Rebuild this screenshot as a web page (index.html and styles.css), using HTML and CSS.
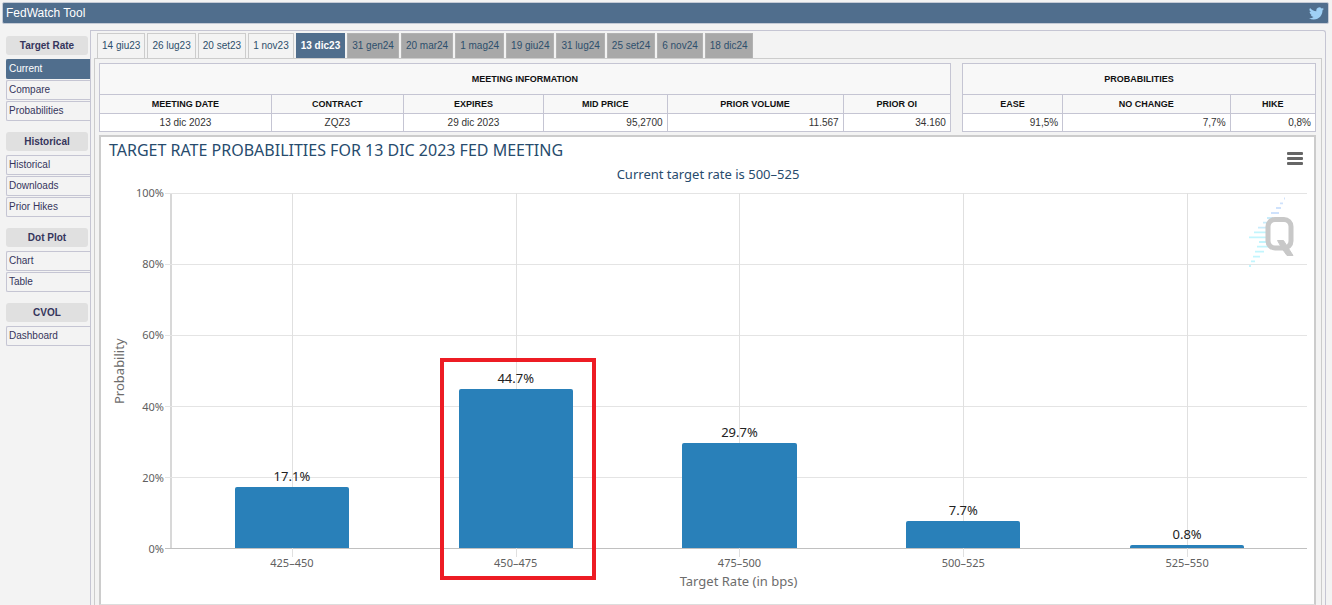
FILE: index.html
```html
<!DOCTYPE html>
<html lang="en">
<head>
<meta charset="utf-8">
<title>FedWatch Tool</title>
<link rel="stylesheet" href="styles.css">
</head>
<body>
<header class="topbar">
  <h1 class="topbar-title">FedWatch Tool</h1>
  <a class="twitter" href="#" aria-label="Twitter">
    <svg viewBox="0 0 24 24" width="15" height="15"><path fill="#9fd0f5" d="M23.95 4.57a10 10 0 0 1-2.82.77 4.96 4.96 0 0 0 2.16-2.72c-.95.55-2 .95-3.13 1.18a4.92 4.92 0 0 0-8.38 4.48C7.69 8.09 4.07 6.13 1.64 3.16a4.92 4.92 0 0 0 1.52 6.57 4.9 4.9 0 0 1-2.23-.61v.06c0 2.38 1.7 4.37 3.95 4.82a5 5 0 0 1-2.21.09 4.94 4.94 0 0 0 4.6 3.42A9.87 9.87 0 0 1 0 19.54a13.99 13.99 0 0 0 7.55 2.21c9.06 0 14-7.5 14-13.98 0-.21 0-.42-.02-.63a9.94 9.94 0 0 0 2.42-2.57z"/></svg>
  </a>
</header>
<div class="layout">
  <nav class="sidebar">
    <section class="group">
      <h2 class="group-title">Target Rate</h2>
      <a class="item active" href="#">Current</a>
      <a class="item" href="#">Compare</a>
      <a class="item" href="#">Probabilities</a>
    </section>
    <section class="group">
      <h2 class="group-title">Historical</h2>
      <a class="item" href="#">Historical</a>
      <a class="item" href="#">Downloads</a>
      <a class="item" href="#">Prior Hikes</a>
    </section>
    <section class="group">
      <h2 class="group-title">Dot Plot</h2>
      <a class="item" href="#">Chart</a>
      <a class="item" href="#">Table</a>
    </section>
    <section class="group">
      <h2 class="group-title">CVOL</h2>
      <a class="item" href="#">Dashboard</a>
    </section>
  </nav>
  <main class="main">
    <div class="tabs">
      <button class="tab">14 giu23</button>
      <button class="tab">26 lug23</button>
      <button class="tab">20 set23</button>
      <button class="tab">1 nov23</button>
      <button class="tab selected">13 dic23</button>
      <button class="tab far">31 gen24</button>
      <button class="tab far">20 mar24</button>
      <button class="tab far">1 mag24</button>
      <button class="tab far">19 giu24</button>
      <button class="tab far">31 lug24</button>
      <button class="tab far">25 set24</button>
      <button class="tab far">6 nov24</button>
      <button class="tab far">18 dic24</button>
    </div>
    <div class="pane">
      <div class="tables">
        <table class="info meeting">
          <colgroup><col class="c-date"><col class="c-contract"><col class="c-expires"><col class="c-mid"><col class="c-volume"><col class="c-oi"></colgroup>
          <thead>
            <tr class="caption-row"><th colspan="6">MEETING INFORMATION</th></tr>
            <tr><th>MEETING DATE</th><th>CONTRACT</th><th>EXPIRES</th><th>MID PRICE</th><th>PRIOR VOLUME</th><th>PRIOR OI</th></tr>
          </thead>
          <tbody>
            <tr><td>13 dic 2023</td><td>ZQZ3</td><td>29 dic 2023</td><td class="num">95,2700</td><td class="num">11.567</td><td class="num">34.160</td></tr>
          </tbody>
        </table>
        <table class="info probs">
          <colgroup><col class="c-ease"><col class="c-nochange"><col class="c-hike"></colgroup>
          <thead>
            <tr class="caption-row"><th colspan="3">PROBABILITIES</th></tr>
            <tr><th>EASE</th><th>NO CHANGE</th><th>HIKE</th></tr>
          </thead>
          <tbody>
            <tr><td class="num">91,5%</td><td class="num">7,7%</td><td class="num">0,8%</td></tr>
          </tbody>
        </table>
      </div>
      <section class="chart">
        <div class="chart-head">
          <h2 class="chart-title">TARGET RATE PROBABILITIES FOR 13 DIC 2023 FED MEETING</h2>
          <button class="menu" aria-label="Chart menu"><span></span><span></span><span></span></button>
        </div>
        <p class="chart-subtitle">Current target rate is 500–525</p>
        <div class="chart-body">
          <div class="y-title">Probability</div>
          <div class="y-axis"><span>100%</span><span>80%</span><span>60%</span><span>40%</span><span>20%</span><span>0%</span></div>
          <div class="plot">
            <div class="gridlines"><i></i><i></i><i></i><i></i><i></i><i></i></div>
            <svg class="watermark" viewBox="0 0 48 72" width="48" height="72" aria-hidden="true">
              <g stroke-width="1.8" fill="none">
                <path stroke="#cfe2fc" d="M35 1.500h1M31 6.300h3M27 11h5M22 16h8"/>
                <path stroke="#c9ecfb" d="M18 21h6M14 25.700h5M9 30.700h8"/>
                <path stroke="#c2f5fd" d="M5 35.300h12M0 40.300h17M10 45h8M8 49.700h11M6 54.700h9M4 59.700h7M2 64.300h4M0 69h2"/>
              </g>
              <rect x="19" y="22.500" width="23" height="28.500" rx="7" fill="none" stroke="#c8c8c8" stroke-width="5"/>
              <path d="M28.500 43.500h6l9.500 15h-6l-5-7z" fill="#c8c8c8" stroke="#c8c8c8"/>
            </svg>
            <div class="column"><span class="value">17.1%</span><div class="bar" style="height:17.1%"></div></div>
            <div class="column"><span class="value">44.7%</span><div class="bar" style="height:44.7%"></div><div class="highlight"></div></div>
            <div class="column"><span class="value">29.7%</span><div class="bar" style="height:29.7%"></div></div>
            <div class="column"><span class="value">7.7%</span><div class="bar" style="height:7.7%"></div></div>
            <div class="column"><span class="value">0.8%</span><div class="bar" style="height:0.8%"></div></div>
          </div>
          <div class="x-axis"><span>425–450</span><span>450–475</span><span>475–500</span><span>500–525</span><span>525–550</span></div>
          <div class="x-title">Target Rate (in bps)</div>
        </div>
      </section>
    </div>
  </main>
</div>
</body>
</html>
```
FILE: styles.css
```css
* { box-sizing: border-box; }

body {
  display: flex;
  flex-direction: column;
  min-height: 100vh;
  margin: 0;
  padding: 2px 3px 0 2px;
  background: #f3f3f3;
  color: #333;
  font: 10px/12px "Liberation Sans", Arial, sans-serif;
}

h1, h2, p { margin: 0; font-weight: normal; }
button { font: inherit; cursor: pointer; }

.topbar {
  display: flex;
  align-items: center;
  justify-content: space-between;
  height: 22px;
  padding: 0 4px 0 3px;
  border: 1px solid #c5cbd6;
  border-radius: 2px;
  background: #506e8d;
}
.topbar-title { color: #fff; font-size: 12px; line-height: 16px; }
.twitter { display: flex; }

.layout { display: flex; flex: 1; padding: 6px 3px 0 4px; }

.sidebar {
  display: flex;
  flex-direction: column;
  gap: 11px;
  flex: 0 0 84px;
  padding-top: 6px;
}
.group { display: flex; flex-direction: column; gap: 1px; }
.group-title {
  margin: 0 2px 3px 0;
  border-radius: 3px;
  background: #e0e0e0;
  color: #35355c;
  font-size: 10px;
  font-weight: bold;
  line-height: 19px;
  text-align: center;
}
.item {
  padding-left: 2px;
  border: 1px solid #c5c5d3;
  border-right: 0;
  border-radius: 2px 0 0 2px;
  color: #35355c;
  line-height: 18px;
  text-decoration: none;
}
.item.active { border-color: #506e8d; background: #506e8d; color: #fff; }

.main {
  display: flex;
  flex-direction: column;
  flex: 1;
  min-width: 0;
  padding: 2px 3px 0;
  border: 1px solid #c5c5d3;
  border-bottom: 0;
  border-radius: 0 3px 0 0;
}
.tabs { display: flex; gap: 2px; padding-left: 3px; }
.tab {
  padding: 0 4px;
  border: 1px solid #ccc;
  border-bottom: 0;
  background: #f3f3f3;
  color: #2d4f6c;
  line-height: 24px;
  white-space: nowrap;
}
.tab.selected { border-color: #506e8d; background: #506e8d; color: #fff; font-weight: bold; }
.tab.far { border-color: #b2b2b2; background: #a8a8a8; }

.pane {
  display: flex;
  flex-direction: column;
  flex: 1;
  gap: 3px;
  padding: 4px 5px 0 4px;
  border: 1px solid #ccc;
  border-bottom: 0;
}
.tables { display: flex; gap: 11px; }
.info { border-collapse: collapse; table-layout: fixed; background: #fff; }
.meeting { width: 70%; }
.probs { width: 0; flex: 1; }
.info th, .info td { border: 1px solid #c5c5d3; padding: 0 4px; text-align: center; }
.info th { height: 19px; background: #f8f8f8; color: #111; font-size: 9px; }
.info .caption-row th { height: 31px; }
.info td { height: 18px; }
.info td.num { text-align: right; }
.c-date { width: 20.2%; }
.c-contract { width: 15.5%; }
.c-expires { width: 16.5%; }
.c-mid { width: 14.5%; }
.c-volume { width: 20.7%; }
.c-oi { width: 12.6%; }
.c-ease { width: 28.4%; }
.c-nochange { width: 47.4%; }
.c-hike { width: 24.2%; }

.chart {
  display: flex;
  flex-direction: column;
  flex: 1;
  padding: 3px 7px 15px 8px;
  border: 2px solid #ccc;
  border-bottom: 1px solid #ddd;
  background: #fff;
  font-family: "Noto Sans", "Open Sans", sans-serif;
}
.chart-head { display: flex; justify-content: space-between; align-items: flex-start; height: 26px; }
.chart-title { color: #274b6d; font-size: 16px; line-height: 20px; }
.menu {
  display: flex;
  flex-direction: column;
  gap: 2px;
  margin: 12px 4px 0 0;
  padding: 0;
  border: 0;
  background: none;
}
.menu span { width: 16px; height: 3px; border-radius: 1px; background: #666; }
.chart-subtitle { color: #274b6d; font-size: 13px; line-height: 16px; text-align: center; }
.chart-body {
  display: grid;
  grid-template: minmax(240px, 1fr) 24px 16px / 20px 41px 1fr;
  flex: 1;
  padding-top: 11px;
}
.y-title {
  color: #6d6d6d;
  font-size: 13px;
  line-height: 20px;
  text-align: center;
  writing-mode: vertical-rl;
  transform: rotate(180deg);
}
.y-axis {
  display: flex;
  flex-direction: column;
  justify-content: space-between;
  padding-right: 6px;
  color: #606060;
  font-size: 11px;
  text-align: right;
}
.y-axis span { height: 0; line-height: 0; }
.plot {
  position: relative;
  display: flex;
  padding: 0 8px;
  border-left: 2px solid #d8d8d8;
  border-bottom: 1px solid #c0c0c0;
}
.gridlines {
  position: absolute;
  inset: 0 0 -1px -7px;
  display: flex;
  flex-direction: column;
  justify-content: space-between;
}
.gridlines i { height: 1px; background: #e4e4e4; }
.gridlines i:last-child { background: #c0c0c0; }
.watermark { position: absolute; top: 4px; right: 10px; }
.column {
  position: relative;
  display: flex;
  flex: 1;
  flex-direction: column;
  align-items: center;
  justify-content: flex-end;
}
.column::before {
  content: "";
  position: absolute;
  top: 0;
  bottom: -9px;
  left: 50%;
  width: 1px;
  background: #e0e0e0;
}
.value { position: relative; color: #222; font-size: 13px; line-height: 22px; }
.bar { position: relative; width: 51%; border-radius: 2px 2px 0 0; background: #2980b9; }
.highlight {
  position: absolute;
  top: 165px;
  right: 32px;
  bottom: -32px;
  left: 36px;
  border: 4px solid #ed1c24;
}
.x-axis {
  grid-column: 3;
  display: flex;
  padding: 6px 8px 0 10px;
  color: #606060;
  font-size: 11px;
  line-height: 16px;
}
.x-axis span { flex: 1; text-align: center; }
.x-title { grid-column: 3; color: #6d6d6d; font-size: 13px; line-height: 16px; text-align: center; }
```
